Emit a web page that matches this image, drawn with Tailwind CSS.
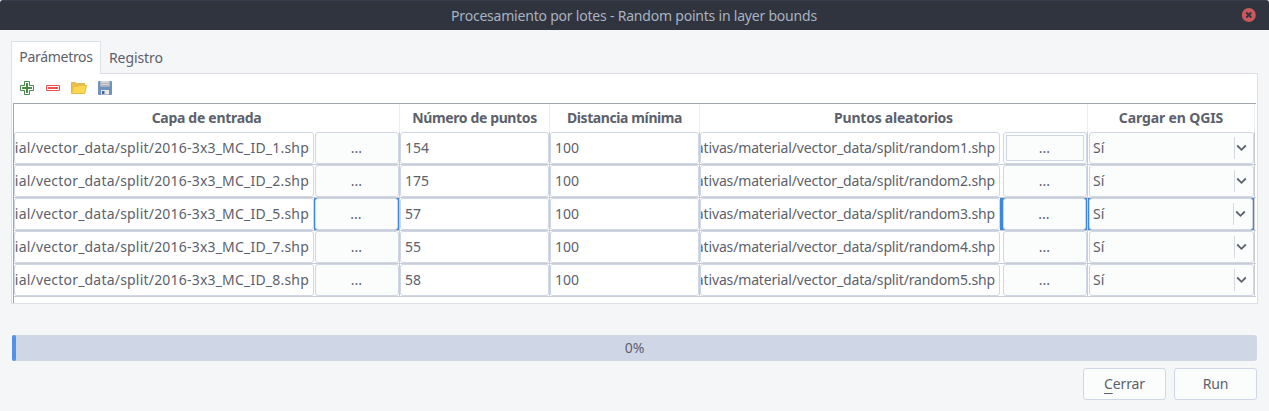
<!DOCTYPE html>
<html lang="es">
<head>
<meta charset="utf-8">
<title>Procesamiento por lotes</title>
<script src="https://cdn.jsdelivr.net/npm/@tailwindcss/browser@4"></script>
</head>
<body class="w-[1269px] h-[411px] overflow-hidden bg-[#f5f6f8] text-[#5c616c] text-[14px] leading-5 font-['Noto_Sans',sans-serif]">
<div class="flex h-full flex-col">
  <header class="relative flex h-[30px] shrink-0 items-center justify-center rounded-t-[3px] border-t border-[#373c4f] bg-[#2f343f] pr-px text-[#a9b2c0]">
    <h1 class="whitespace-nowrap tracking-[-0.21px]">Procesamiento por lotes - Random points in layer bounds</h1>
    <svg class="absolute left-[1241px] top-[7px]" width="15" height="15" viewBox="0 0 15 15"><circle cx="7.800" cy="7" r="7" fill="#cc575d"/><path d="M5.300 4.500l5 5M10.300 4.500l-5 5" stroke="#2f343f" stroke-width="1.8"/></svg>
  </header>

  <nav class="flex h-[43px] shrink-0 items-end pl-[11px] pt-[11px]">
    <div class="z-10 -mb-px flex h-[33px] w-[90px] justify-center border border-b-0 border-[#dce0e8] bg-white pt-[5px]"><span class="tracking-[-0.3px]">Parámetros</span></div>
    <div class="flex h-8 items-start pl-2 pt-[7px]"><span class="tracking-[-0.1px]">Registro</span></div>
  </nav>

  <main class="ml-[11px] flex h-[231px] w-[1247px] shrink-0 flex-col border border-[#dce0e6] bg-white pl-px">
    <div class="flex h-[29px] shrink-0 items-center gap-[10px] pl-[6px] pb-px">
      <svg width="16" height="16" viewBox="0 0 16 16"><path d="M5.5 1.500h5v4h4v5h-4v4h-5v-4h-4v-5h4z" fill="#fff" stroke="#4c8a4c"/><path d="M8 3v10M3 8h10" stroke="#4c8a4c" stroke-width="2"/></svg>
      <svg width="16" height="16" viewBox="0 0 16 16"><path d="M1.500 5.500h13v5h-13z" fill="#fff" stroke="#ef4e4e"/><path d="M3 8h10" stroke="#ef4e4e" stroke-width="2"/></svg>
      <svg width="16" height="16" viewBox="0 0 16 16"><path d="M.5 13.500V2.500h4l1 1h8v3" fill="#e9c14a" stroke="#dfb74a"/><path d="M.7 13.500l2-7h4l1-1h7.800l-1.800 8z" fill="#fcd64f" stroke="#e3bb45"/></svg>
      <svg width="16" height="16" viewBox="0 0 16 16"><rect x="1" y="1" width="14" height="14" rx="1" fill="#6f93bf"/><rect x="3.500" y="1" width="9" height="5.500" fill="#d4d5d4"/><path d="M3.500 3.500h9M3.500 5.500h9" stroke="#b0b1b0"/><rect x="4" y="10" width="8" height="4.500" fill="#e8e8e8"/><rect x="5" y="11" width="2.500" height="3" fill="#4c6685"/></svg>
    </div>
    <section class="h-[200px] w-[1243px] border-l border-t border-[#9fa6b2]">
      <div class="grid h-7 grid-cols-[386px_150px_150px_388px_167px] text-center font-bold leading-[28px]">
        <div class="border-r border-[#ebedf0] tracking-[-0.3px]">Capa de entrada</div>
        <div class="border-r border-[#ebedf0] tracking-[-0.37px]">Número de puntos</div>
        <div class="border-r border-[#ebedf0] tracking-[-0.4px]">Distancia mínima</div>
        <div class="border-r border-[#ebedf0] tracking-[-0.23px]">Puntos aleatorios</div>
        <div class="border-r border-[#ebedf0] tracking-[-0.13px]">Cargar en QGIS</div>
      </div>
      <div id="rows"></div>
    </section>
  </main>

  <div class="mx-[12px] mt-[31px] flex h-[26px] shrink-0 items-center rounded-[3px] bg-[#cfd6e6]">
    <div class="h-[26px] w-1 rounded-[2px] bg-[#5294e2]"></div>
    <div class="flex-1 pr-1 text-center">0%</div>
  </div>
  <footer class="mr-[12px] mt-[7px] flex shrink-0 justify-end gap-2">
    <button class="h-8 w-[83px] rounded-[3px] border border-[#cfd6e6] bg-[#fbfcfc] tracking-[-0.1px]"><span class="underline underline-offset-[4px]">C</span>errar</button>
    <button class="h-8 w-[83px] rounded-[3px] border border-[#cfd6e6] bg-[#fbfcfc] tracking-[-0.2px]">Run</button>
  </footer>
</div>

<template id="row">
  <div class="grid h-[33px] grid-cols-[386px_150px_150px_388px_167px] border-b border-[#c9ccd2]">
    <div class="flex border-r border-[#c9ccd2]">
      <div class="flex w-[300px] items-center rounded-[3px] border border-[#cfd6e6] bg-white pr-1"><div class="flex flex-1 justify-end overflow-hidden whitespace-nowrap"><span class="tracking-[0.2px]" data-f="in"></span></div></div>
      <div data-hl class="flex-1 pl-px"><div class="h-8 rounded-[3px] border border-[#cfd6e6] bg-[#fbfcfc] pt-[5px] pr-px text-center">...</div></div>
    </div>
    <div class="border-r border-[#c9ccd2]"><div class="h-8 rounded-[3px] border border-[#cfd6e6] bg-white pl-1 pt-[5px]" data-f="n"></div></div>
    <div class="border-r border-[#c9ccd2]"><div class="h-8 rounded-[3px] border border-[#cfd6e6] bg-white pl-1 pt-[5px]">100</div></div>
    <div class="flex border-r border-[#c9ccd2]">
      <div class="flex w-[300px] items-center rounded-[3px] border border-[#cfd6e6] bg-white pr-1"><div class="flex flex-1 justify-end overflow-hidden whitespace-nowrap"><span class="tracking-[-0.15px]" data-f="out"></span></div></div>
      <div data-hl class="flex-1 pl-[3px]"><div class="h-8 rounded-[3px] border border-[#cfd6e6] bg-[#fbfcfc] p-[2px]"><div data-focus class="h-full border border-transparent pt-[2px] pr-px text-center">...</div></div></div>
    </div>
    <div class="border-r border-[#c9ccd2]">
      <div data-hl class="pl-px"><div class="flex h-8 items-center rounded-[3px] border border-[#cfd6e6] bg-[#fbfcfc] pl-[3px]">
        <span class="flex-1">Sí</span>
        <svg class="-mr-px" width="20" height="22" viewBox="0 0 20 22" fill="none"><path d="M.5 0v22" stroke="#d5d8de"/><path d="M3.200 8.500l4.300 4.300 4.300-4.300" stroke="#5c616c" stroke-width="1.800"/></svg>
      </div></div>
    </div>
  </div>
</template>
<script>
const data = [[1,154],[2,175],[5,57],[7,55],[8,58]];
const tpl = document.getElementById('row'), rows = document.getElementById('rows');
data.forEach(([id, n], i) => {
  const r = tpl.content.cloneNode(true);
  r.querySelector('[data-f=in]').textContent = `ial/vector_data/split/2016-3x3_MC_ID_${id}.shp`;
  r.querySelector('[data-f=n]').textContent = n;
  r.querySelector('[data-f=out]').textContent = `ativas/material/vector_data/split/random${i + 1}.shp`;
  if (i === 0) r.querySelector('[data-focus]').classList.replace('border-transparent', 'border-[#cfd6e6]');
  // The selected row shows its highlight along the sides of its buttons.
  if (i === 2) r.querySelectorAll('[data-hl]').forEach(e => e.classList.add('bg-[#3f87dc]', 'pr-px'));
  rows.append(r);
});
</script>
</body>
</html>
